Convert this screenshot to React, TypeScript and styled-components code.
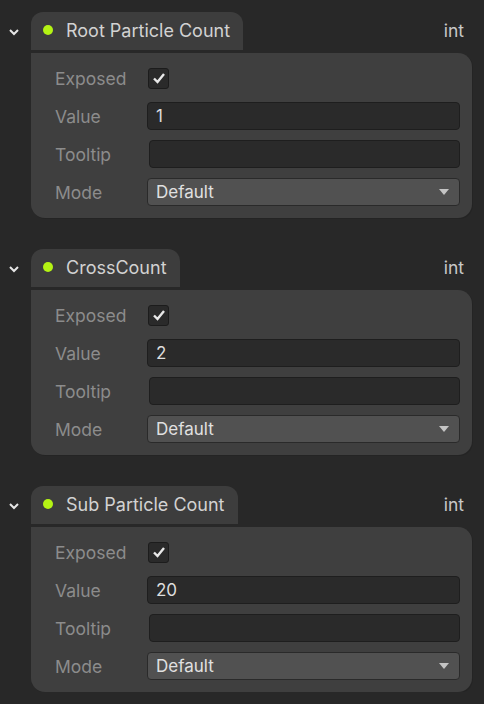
import styled, { createGlobalStyle } from "styled-components";

interface Property {
  name: string;
  type: string;
  value: string;
  tooltip: string;
  mode: string;
}

const properties: Property[] = [
  { name: "Root Particle Count", type: "int", value: "1", tooltip: "", mode: "Default" },
  { name: "CrossCount", type: "int", value: "2", tooltip: "", mode: "Default" },
  { name: "Sub Particle Count", type: "int", value: "20", tooltip: "", mode: "Default" },
];

const GlobalStyle = createGlobalStyle`
  body {
    margin: 0;
    background: #282828;
    font-family: Inter, "Noto Sans", sans-serif;
  }
`;

const Page = styled.div`
  display: flex;
  flex-direction: column;
  gap: 31px;
  padding: 12px 12px 0 0;
  width: 484px;
  box-sizing: border-box;
`;

const Section = styled.section`
  display: grid;
  grid-template-columns: 31px 1fr;
`;

const Toggle = styled.div`
  height: 38px;
  display: flex;
  align-items: center;
  justify-content: center;
  padding-right: 4px;
  padding-top: 2px;
  box-sizing: border-box;
`;

const Body = styled.div`
  display: flex;
  flex-direction: column;
  gap: 3px;
`;

const Header = styled.div`
  display: flex;
  align-items: center;
  height: 38px;
  padding-bottom: 2px;
  box-sizing: border-box;
`;

const Tab = styled.div`
  display: flex;
  align-items: center;
  gap: 13px;
  height: 38px;
  padding: 0 13px 2px 12px;
  background: #3d3d3d;
  border-radius: 12px 12px 0 0;
  box-sizing: border-box;
  align-self: flex-start;
`;

const Dot = styled.span`
  width: 10px;
  height: 10px;
  border-radius: 50%;
  background: #b4f314;
`;

const Title = styled.span`
  font-size: 18px;
  color: #d2d2d2;
`;

const TypeLabel = styled.span`
  margin-left: auto;
  padding-right: 8px;
  font-size: 17.5px;
  color: #c8c8c8;
`;

const Card = styled.div`
  background: #3f3f3f;
  border-radius: 0 14px 14px 14px;
  padding: 6px 12px 7px 24px;
  box-shadow: 1px 1px 0 #242424;
`;

const Row = styled.div`
  display: grid;
  grid-template-columns: 92px 1fr;
  align-items: center;
  height: 38px;
`;

const Label = styled.span`
  font-size: 17.5px;
  color: #8c8c8c;
`;

const CheckBox = styled.div`
  width: 21px;
  height: 21px;
  margin-left: 1px;
  box-sizing: border-box;
  border: 1px solid #1c1c1c;
  border-radius: 3px;
  background: #2a2a2a;
  display: flex;
  align-items: center;
  justify-content: center;
`;

const Field = styled.div<{ $inset?: boolean }>`
  height: 28px;
  box-sizing: border-box;
  margin-left: ${(p) => (p.$inset ? "2px" : "0")};
  border: 1px solid #1e1e1e;
  border-radius: 4px;
  background: #2a2a2a;
  display: flex;
  align-items: center;
  padding: 0 8px;
  font-size: 17px;
  color: #dedede;
`;

const Select = styled(Field)`
  background: #515151;
  border-color: #2a2a2a;
  justify-content: space-between;
  padding-right: 10px;
  color: #e0e0e0;
`;

const Arrow = styled.span`
  width: 0;
  height: 0;
  border-left: 5px solid transparent;
  border-right: 5px solid transparent;
  border-top: 6px solid #c4c4c4;
`;

const Chevron = () => (
  <svg width="12" height="8" viewBox="0 0 12 8">
    <path d="M2 2 L6 6 L10 2" fill="none" stroke="#e6e6e6" strokeWidth="2" />
  </svg>
);

const Check = () => (
  <svg width="14" height="12" viewBox="0 0 14 12">
    <path d="M2 6.5 L5.5 10 L12 2" fill="none" stroke="#e8e8e8" strokeWidth="2.4" />
  </svg>
);

const PropertyBlock = ({ prop }: { prop: Property }) => (
  <Section>
    <Toggle>
      <Chevron />
    </Toggle>
    <Body>
      <Header>
        <Tab>
          <Dot />
          <Title>{prop.name}</Title>
        </Tab>
        <TypeLabel>{prop.type}</TypeLabel>
      </Header>
      <Card>
        <Row>
          <Label>Exposed</Label>
          <CheckBox>
            <Check />
          </CheckBox>
        </Row>
        <Row>
          <Label>Value</Label>
          <Field>{prop.value}</Field>
        </Row>
        <Row>
          <Label>Tooltip</Label>
          <Field $inset>{prop.tooltip}</Field>
        </Row>
        <Row>
          <Label>Mode</Label>
          <Select>
            {prop.mode}
            <Arrow />
          </Select>
        </Row>
      </Card>
    </Body>
  </Section>
);

export default function App() {
  return (
    <>
      <GlobalStyle />
      <Page>
        {properties.map((p) => (
          <PropertyBlock key={p.name} prop={p} />
        ))}
      </Page>
    </>
  );
}
